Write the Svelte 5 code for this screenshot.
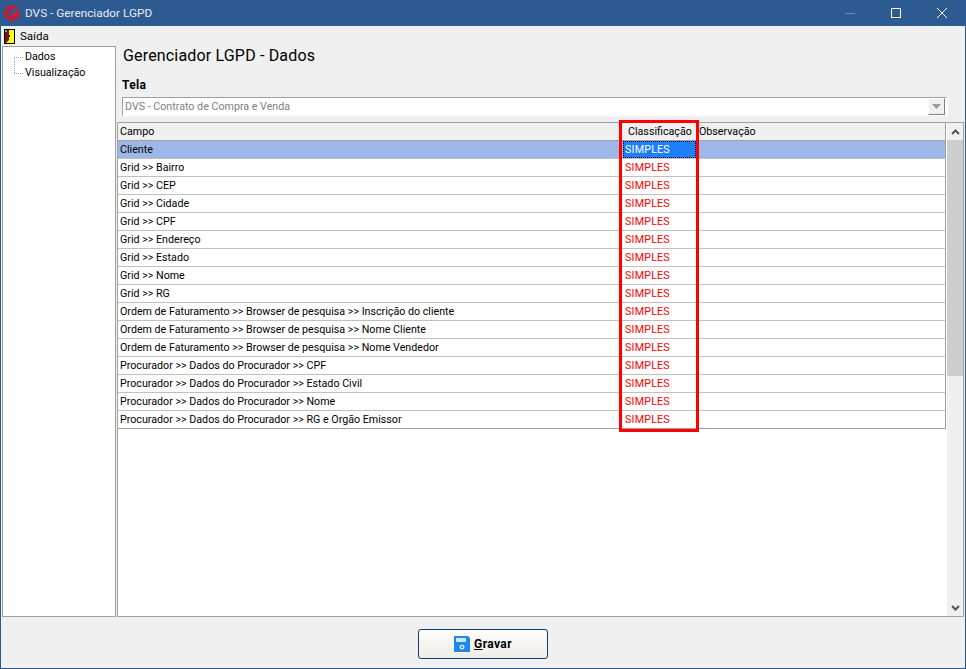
<script>
	const rows = [
		'Cliente',
		'Grid >> Bairro',
		'Grid >> CEP',
		'Grid >> Cidade',
		'Grid >> CPF',
		'Grid >> Endereço',
		'Grid >> Estado',
		'Grid >> Nome',
		'Grid >> RG',
		'Ordem de Faturamento >> Browser de pesquisa >> Inscrição do cliente',
		'Ordem de Faturamento >> Browser de pesquisa >> Nome Cliente',
		'Ordem de Faturamento >> Browser de pesquisa >> Nome Vendedor',
		'Procurador >> Dados do Procurador >> CPF',
		'Procurador >> Dados do Procurador >> Estado Civil',
		'Procurador >> Dados do Procurador >> Nome',
		'Procurador >> Dados do Procurador >> RG e Orgão Emissor',
	]
</script>

<div class="window">
	<header class="titlebar">
		<svg class="logo" viewBox="0 0 16 16" width="16" height="16">
			<circle cx="8" cy="8" r="8" fill="#b81f3c" />
			<circle cx="8.500" cy="8" r="3.500" fill="#2e5a92" />
			<path d="M9 3.500h7v2.500H9z" fill="#2e5a92" />
			<path d="M8 7h8l-1 3h-3l-2 1.500H8z" fill="#c8233f" />
		</svg>
		<span class="title">DVS - Gerenciador LGPD</span>
		<div class="controls">
			<svg viewBox="0 0 46 26" width="46" height="26"><line x1="18" y1="13.500" x2="28" y2="13.500" stroke="#6f8fb8" /></svg>
			<svg viewBox="0 0 46 26" width="46" height="26"><rect x="18.500" y="8.500" width="9" height="9" fill="none" stroke="#fff" /></svg>
			<svg viewBox="0 0 46 26" width="46" height="26"><path d="M18 8l10 10M28 8L18 18" stroke="#fff" fill="none" /></svg>
		</div>
	</header>

	<nav class="menubar">
		<svg viewBox="0 0 11 15" width="11" height="15">
			<rect x="0" y="0" width="11" height="15" fill="#000" />
			<rect x="1" y="1" width="9" height="13" fill="#ff0" />
			<path d="M1 1h4v10l-3 3h-1z" fill="#7a1020" />
			<rect x="1" y="1" width="2" height="2" fill="#3fb6d8" />
			<rect x="5" y="6" width="1" height="2" fill="#000" />
		</svg>
		<span>Saída</span>
	</nav>

	<div class="body">
		<aside class="tree">
			<div class="node">Dados</div>
			<div class="node">Visualização</div>
		</aside>

		<main class="content">
			<h1>Gerenciador LGPD - Dados</h1>
			<label for="tela">Tela</label>
			<div id="tela" class="combo">
				<span>DVS - Contrato de Compra e Venda</span>
				<div class="combo-btn">
					<svg viewBox="0 0 9 5" width="9" height="5"><path d="M0 0h9L4.500 5z" fill="#9a9a9a" /></svg>
				</div>
			</div>

			<div class="grid-box">
				<div class="grid">
					<div class="row head">
						<div class="c1">Campo</div>
						<div class="c2">Classificação</div>
						<div class="c3">Observação</div>
					</div>
					{#each rows as row, i}
						<div class="row" class:selected={i === 0}>
							<div class="c1">{row}</div>
							<div class="c2">SIMPLES</div>
							<div class="c3"></div>
						</div>
					{/each}
					<div class="highlight"></div>
				</div>
				<div class="scrollbar">
					<div class="arrow">
						<svg viewBox="0 0 9 6" width="9" height="6"><path d="M1 5l3.500-3.500L8 5" fill="none" stroke="#555" stroke-width="2" /></svg>
					</div>
					<div class="track"><div class="thumb"></div></div>
					<div class="arrow">
						<svg viewBox="0 0 9 6" width="9" height="6"><path d="M1 1l3.500 3.500L8 1" fill="none" stroke="#555" stroke-width="2" /></svg>
					</div>
				</div>
			</div>
		</main>
	</div>

	<footer class="footer">
		<button class="save">
			<svg viewBox="0 0 16 16" width="16" height="16">
				<path d="M0 0h14l2 2v14H0z" fill="#1e88e5" />
				<rect x="2" y="2" width="10" height="4" fill="#cfe4f7" />
				<circle cx="8" cy="11" r="2.500" fill="#cfe4f7" />
				<circle cx="8" cy="11" r="1" fill="#1e88e5" />
			</svg>
			<span><u>G</u>ravar</span>
		</button>
	</footer>
</div>

<style>
	:global(body) {
		margin: 0;
	}

	.window {
		width: 966px;
		height: 669px;
		box-sizing: border-box;
		display: flex;
		flex-direction: column;
		background: #f0f0f0;
		border: 1px solid #2e5a92;
		border-top: 0;
		font: 10.7px Roboto, sans-serif;
		color: #000;
		overflow: hidden;
	}

	.titlebar {
		height: 26px;
		flex: none;
		display: flex;
		align-items: center;
		gap: 5px;
		padding-left: 3px;
		background: #2e5a92;
	}

	.title {
		color: #e4ebf4;
		font-size: 11.800px;
	}

	.logo {
		flex: none;
	}

	.controls {
		margin-left: auto;
		display: flex;
	}

	.menubar {
		height: 20px;
		flex: none;
		display: flex;
		align-items: center;
		gap: 5px;
		padding-left: 3px;
		font-size: 11.500px;
	}

	.body {
		height: 571px;
		flex: none;
		display: flex;
		padding-left: 1px;
	}

	.tree {
		width: 114px;
		flex: none;
		box-sizing: border-box;
		background: #fff;
		border: 1px solid #a0a0a0;
		padding-top: 2px;
		padding-left: 22px;
	}

	.node {
		height: 16px;
		line-height: 16px;
		position: relative;
	}

	.node::before {
		content: "";
		position: absolute;
		left: -11px;
		top: 8px;
		width: 9px;
		border-top: 1px dotted #a0a0a0;
	}

	.node:first-child::after {
		content: "";
		position: absolute;
		left: -11px;
		top: 8px;
		height: 16px;
		border-left: 1px dotted #a0a0a0;
	}

	.content {
		flex: 1;
		min-width: 0;
		display: flex;
		flex-direction: column;
		padding-left: 1px;
	}

	h1 {
		margin: 0;
		padding: 0 0 0 6px;
		height: 20px;
		font-size: 16px;
		font-weight: 400;
		line-height: 20px;
		letter-spacing: 0.170px;
	}

	label {
		margin-top: 12px;
		padding-left: 5px;
		height: 14px;
		line-height: 14px;
		font-weight: 700;
		font-size: 12px;
		letter-spacing: 0.3px;
	}

	.combo {
		margin: 5px 17px 0 5px;
		height: 19px;
		box-sizing: border-box;
		display: flex;
		align-items: center;
		justify-content: space-between;
		background: #fff;
		border: 1px solid #a0a0a0;
		border-right: 3px solid #fff;
		border-bottom: 1px solid #fff;
		padding-left: 2px;
		color: #808080;
	}

	.combo-btn {
		width: 17px;
		height: 17px;
		box-sizing: border-box;
		display: flex;
		align-items: center;
		justify-content: center;
		background: #f0f0f0;
		border: 1px solid #fff;
		border-right-color: #808080;
		border-bottom-color: #808080;
	}

	.grid-box {
		margin-top: 6px;
		height: 495px;
		box-sizing: border-box;
		display: flex;
		background: #fff;
		border: 1px solid #a0a0a0;
		margin-right: 1px;
	}

	.grid {
		flex: 1;
		min-width: 0;
		position: relative;
	}

	.row {
		height: 18px;
		box-sizing: border-box;
		display: flex;
		border-bottom: 1px solid #c0c0c0;
		border-right: 1px solid #a0a0a0;
		margin-right: 1px;
		line-height: 18px;
	}

	.row:nth-last-child(2) {
		border-bottom-color: #a0a0a0;
	}

	.head {
		background: #f0f0f0;
		border-bottom-color: #a0a0a0;
	}

	.selected {
		background: #9db8e8;
	}

	.c1 {
		width: 505px;
		flex: none;
		box-sizing: border-box;
		padding-left: 2px;
		white-space: nowrap;
	}

	.c2 {
		width: 73px;
		flex: none;
		box-sizing: border-box;
		padding-left: 2px;
		color: #f00;
		letter-spacing: 0.2px;
	}

	.head .c2 {
		color: #000;
		padding-left: 5px;
		letter-spacing: 0;
	}

	.head .c3 {
		padding-left: 3px;
	}

	.selected .c2 {
		height: 17px;
		background: #1e7ffb;
		color: #fff;
		outline: 1px dotted #000;
		outline-offset: -1px;
	}

	.highlight {
		position: absolute;
		left: 501px;
		top: -3px;
		width: 80px;
		height: 312px;
		box-sizing: border-box;
		border: 3px solid #f00;
		pointer-events: none;
	}

	.scrollbar {
		width: 16px;
		flex: none;
		display: flex;
		flex-direction: column;
		background: #f0f0f0;
	}

	.arrow {
		height: 17px;
		flex: none;
		display: flex;
		align-items: center;
		justify-content: center;
	}

	.track {
		flex: 1;
	}

	.thumb {
		height: 236px;
		background: #cdcdcd;
	}

	.footer {
		flex: 1;
		display: flex;
		justify-content: center;
		padding-top: 12px;
		box-sizing: border-box;
	}

	.save {
		width: 130px;
		height: 30px;
		display: flex;
		align-items: center;
		justify-content: center;
		gap: 4px;
		padding: 0;
		background: linear-gradient(#fdfdfd, #f0ece8);
		border: 1px solid #0b3f7a;
		border-radius: 3px;
		font: 700 12px Roboto, sans-serif;
		letter-spacing: 0.4px;
		color: #000;
	}
</style>
